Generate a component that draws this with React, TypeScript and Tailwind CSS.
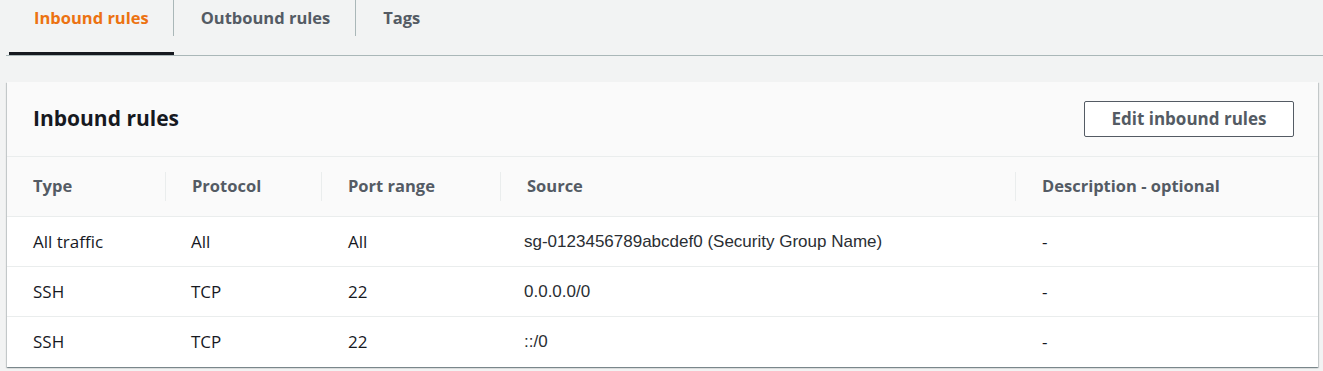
const rows = [
  { type: "All traffic", protocol: "All", port: "All", source: "sg-0123456789abcdef0 (Security Group Name)", description: "-" },
  { type: "SSH", protocol: "TCP", port: "22", source: "0.0.0.0/0", description: "-" },
  { type: "SSH", protocol: "TCP", port: "22", source: "::/0", description: "-" },
];

const columns = ["Type", "Protocol", "Port range", "Source", "Description - optional"];

const tabs = ["Inbound rules", "Outbound rules", "Tags"];

export default function App() {
  return (
    <div
      className="w-[1323px] h-[371px] overflow-hidden bg-[#f2f3f3] text-[#16191f]"
      style={{ fontFamily: '"Open Sans", "Liberation Sans", sans-serif' }}
    >
      {/* Tabs */}
      <div className="ml-[6px] pl-[3px] flex border-b border-[#aab7b8]">
        {tabs.map((tab, i) => (
          <button
            key={tab}
            className={`h-[55px] flex flex-col ${
              i === 0 ? "border-b-[3px] border-[#16191f]" : "border-b-[3px] border-transparent"
            }`}
          >
            <span
              className={`h-[36px] flex items-center text-[16.5px] font-bold ${
                i === 0 ? "pl-[25px] pr-[24px] text-[#ec7211]" : "pl-[27px] pr-[25px] text-[#545b64]"
              } ${i < tabs.length - 1 ? "border-r border-[#aab7b8]" : ""}`}
            >
              {tab}
            </span>
          </button>
        ))}
      </div>

      {/* Card */}
      <div className="mt-[26px] ml-[7px] w-[1311px] bg-white shadow-[0_1px_1px_0_rgba(0,28,36,0.3),1px_1px_1px_0_rgba(0,28,36,0.15),-1px_1px_1px_0_rgba(0,28,36,0.15)]">
        <div className="h-[75px] pl-[26px] pr-[24px] flex items-center justify-between bg-[#fafafa] border-b border-[#eaeded]">
          <h2 className="text-[21px] font-bold text-[#16191f] -mt-[1px]">Inbound rules</h2>
          <button className="w-[210px] h-[36px] border border-[#545b64] rounded-[2px] bg-white text-[17px] font-bold text-[#545b64]">
            Edit inbound rules
          </button>
        </div>

        <div className="grid grid-cols-[158px_156px_179px_515px_1fr] h-[60px] bg-[#fafafa] border-b border-[#eaeded] items-center">
          {columns.map((col, i) => (
            <div
              key={col}
              className={`h-[29px] flex items-center pl-[26px] text-[16.5px] font-bold text-[#545b64] ${
                i > 0 ? "border-l border-[#eaeded]" : ""
              }`}
            >
              {col}
            </div>
          ))}
        </div>

        {rows.map((row, idx) => (
          <div
            key={idx}
            className={`grid grid-cols-[158px_156px_179px_515px_1fr] h-[50px] items-center text-[17px] ${
              idx < rows.length - 1 ? "border-b border-[#eaeded]" : ""
            }`}
          >
            <div className="pl-[26px]">{row.type}</div>
            <div className="pl-[26px]">{row.protocol}</div>
            <div className="pl-[27px]">{row.port}</div>
            <div className="pl-[24px] text-[#2a2e33] font-['Liberation_Sans',Arial,sans-serif]">{row.source}</div>
            <div className="pl-[27px]">{row.description}</div>
          </div>
        ))}
      </div>
    </div>
  );
}
